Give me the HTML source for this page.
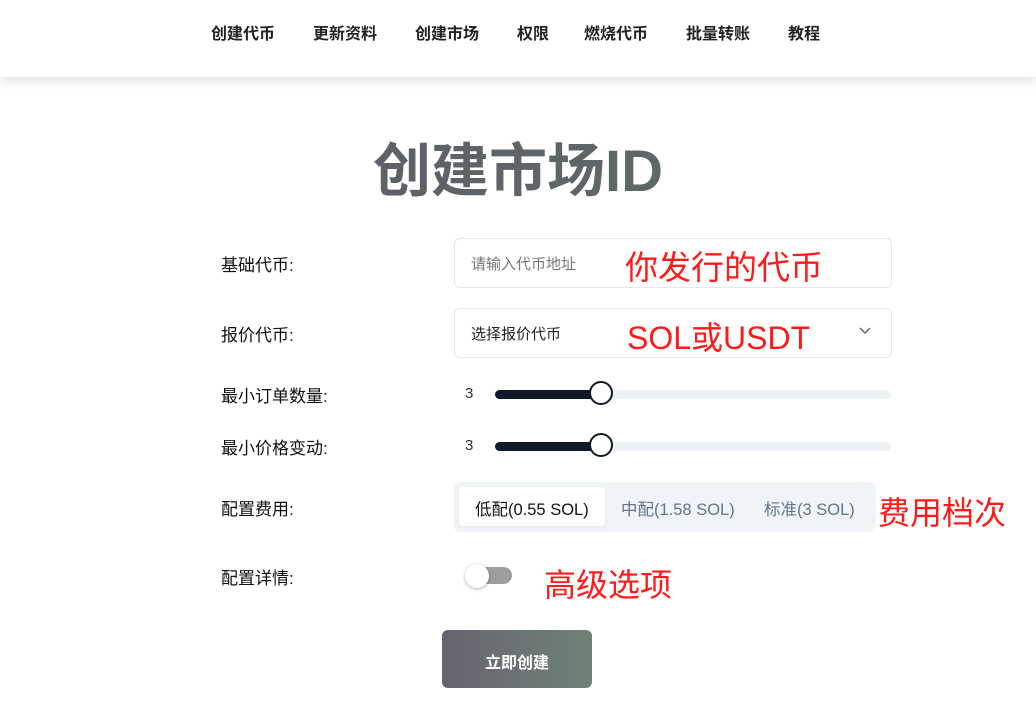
<!DOCTYPE html><html><head><meta charset="utf-8"><style>
body{margin:0;width:1036px;height:720px;background:#fff;font-family:"Liberation Sans","Noto Sans CJK SC",sans-serif;position:relative;overflow:hidden}
.hdr{position:absolute;left:0;top:0;width:1036px;height:77px;background:#fff;box-shadow:0 4px 10px rgba(0,0,0,.12)}
.nav{position:absolute;top:20px;font-size:16px;font-weight:bold;color:#222}
.a{position:absolute}
.title{position:absolute;left:0;width:1036px;top:124px;text-align:center;font-size:58px;font-weight:bold;background:linear-gradient(90deg,#5e5a66,#5f6e6a);-webkit-background-clip:text;color:transparent}
.lbl{position:absolute;left:221px;font-size:17px;color:#111}
.inp{position:absolute;left:454px;width:436px;height:48px;border:1px solid #e2e8f0;border-radius:6px;background:#fff}
.red{position:absolute;color:#ff1a1a;font-size:32px}
.track{position:absolute;left:495px;width:396px;height:9px;border-radius:5px;background:#eef2f7}
.fill{position:absolute;left:495px;width:106px;height:9px;border-radius:5px;background:#111827}
.thumb{position:absolute;left:589px;width:20px;height:20px;border:2px solid #111827;border-radius:50%;background:#fff}
</style></head><body>
<div class="hdr"></div>
<div class="nav" style="left:211px">创建代币</div>
<div class="nav" style="left:313px">更新资料</div>
<div class="nav" style="left:415px">创建市场</div>
<div class="nav" style="left:517px">权限</div>
<div class="nav" style="left:584px">燃烧代币</div>
<div class="nav" style="left:686px">批量转账</div>
<div class="nav" style="left:788px">教程</div>
<div class="title">创建市场ID</div>

<div class="lbl" style="top:251px">基础代币:</div>
<div class="inp" style="top:238px"></div>
<div class="a" style="left:471px;top:253px;font-size:15px;color:#777">请输入代币地址</div>
<div class="red" style="left:625px;top:241px;font-size:33px">你发行的代币</div>

<div class="lbl" style="top:321px">报价代币:</div>
<div class="inp" style="top:308px"></div>
<div class="a" style="left:471px;top:323px;font-size:15px;color:#222">选择报价代币</div>
<div class="red" style="left:627px;top:313px">SOL或USDT</div>
<svg class="a" style="left:858px;top:326px" width="14" height="10"><path d="M2 2l5 5 5-5" stroke="#666" stroke-width="1.5" fill="none"/></svg>

<div class="lbl" style="top:382px">最小订单数量:</div>
<div class="a" style="left:465px;top:385px;font-size:15px;color:#333">3</div>
<div class="track" style="top:390px"></div><div class="fill" style="top:390px"></div><div class="thumb" style="top:381px"></div>

<div class="lbl" style="top:434px">最小价格变动:</div>
<div class="a" style="left:465px;top:437px;font-size:15px;color:#333">3</div>
<div class="track" style="top:442px"></div><div class="fill" style="top:442px"></div><div class="thumb" style="top:433px"></div>

<div class="lbl" style="top:495px">配置费用:</div>
<div class="a" style="left:454px;top:482px;width:422px;height:50px;border-radius:6px;background:#f0f3f8"></div>
<div class="a" style="left:459px;top:487px;width:146px;height:39px;border-radius:4px;background:#fff;box-shadow:0 1px 2px rgba(0,0,0,.06)"></div>
<div class="a" style="left:475px;top:496px;font-size:16.5px;color:#111">低配(0.55 SOL)</div>
<div class="a" style="left:621px;top:496px;font-size:16.5px;color:#64748b">中配(1.58 SOL)</div>
<div class="a" style="left:764px;top:496px;font-size:16.5px;color:#64748b">标准(3 SOL)</div>
<div class="red" style="left:878px;top:488px">费用档次</div>

<div class="lbl" style="top:564px">配置详情:</div>
<div class="a" style="left:466px;top:567px;width:46px;height:17px;border-radius:9px;background:#9e9e9e"></div>
<div class="a" style="left:465px;top:564px;width:24px;height:24px;border-radius:50%;background:#fff;box-shadow:0 1px 3px rgba(0,0,0,.3)"></div>
<div class="red" style="left:544px;top:560px">高级选项</div>

<div class="a" style="left:442px;top:630px;width:150px;height:58px;border-radius:6px;background:linear-gradient(90deg,#68636f,#6e8278)"></div>
<div class="a" style="left:442px;top:649px;width:150px;text-align:center;color:#fff;font-weight:bold;font-size:16px">立即创建</div>
</body></html>
